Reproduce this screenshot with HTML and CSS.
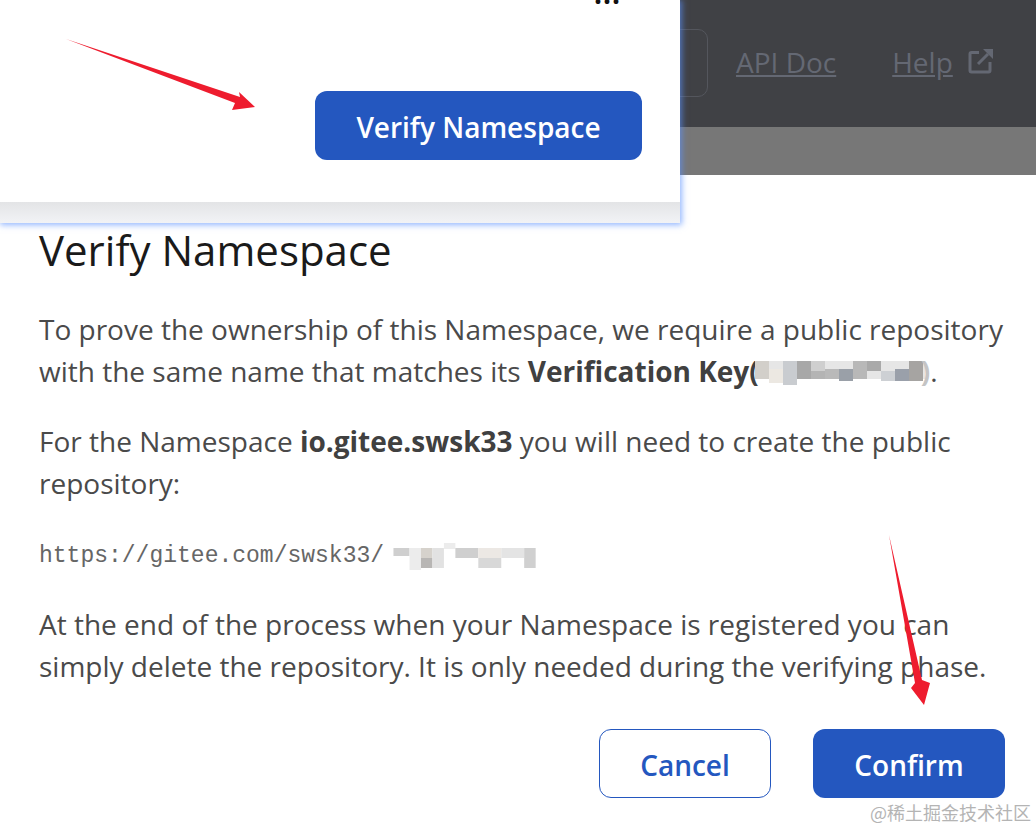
FILE: index.html
```html
<!DOCTYPE html>
<html lang="en">
<head>
<meta charset="utf-8">
<title>Verify Namespace</title>
<link rel="stylesheet" href="styles.css">
</head>
<body>
<div class="page">
  <header class="topbar">
    <div class="search-edge"></div>
    <a class="nav-link api" href="#">API Doc</a>
    <a class="nav-link" href="#">Help</a>
    <svg class="ext" width="26" height="26" viewBox="0 0 26 26" fill="none" stroke="#646873" stroke-width="3"><path d="M11 4.500H3.500A1.500 1.500 0 0 0 2 6V22.500A1.500 1.500 0 0 0 3.500 24H20.500A1.500 1.500 0 0 0 22 22.500V14"/><path d="M10 16 20 6"/><path d="M15 1H25V11L21.500 7.500 18.500 4.500Z" fill="#646873" stroke="none"/></svg>
  </header>
  <div class="strip"></div>
  <main class="dialog">
    <h2 class="title">Verify Namespace</h2>
    <p class="para">To prove the ownership of this Namespace, we require a public repository with the same name that matches its <b>Verification Key(<svg class="blur key" width="170" height="26" viewBox="0 0 170 26"><rect x="0" y="2" width="170" height="18" fill="#e6e6e6"/><rect x="0" y="2" width="14" height="18" fill="#d2cfca"/><rect x="14" y="10" width="14" height="14" fill="#ece8e2"/><rect x="28" y="2" width="14" height="24" fill="#c9ccd0"/><rect x="42" y="2" width="14" height="18" fill="#a8a8a8"/><rect x="56" y="2" width="14" height="10" fill="#cfcfcf"/><rect x="56" y="12" width="14" height="8" fill="#b4b4b4"/><rect x="70" y="10" width="14" height="10" fill="#b9b9b9"/><rect x="84" y="10" width="14" height="12" fill="#9aa0a8"/><rect x="98" y="2" width="14" height="18" fill="#b8b8b8"/><rect x="112" y="2" width="14" height="10" fill="#a9a9a9"/><rect x="126" y="12" width="14" height="10" fill="#cdd0d4"/><rect x="140" y="10" width="14" height="12" fill="#9aa0aa"/><rect x="154" y="2" width="14" height="20" fill="#a6a4a2"/></svg><span class="faint">)</span></b>.</p>
    <p class="para">For the Namespace <b>io.gitee.swsk33</b> you will need to create the public repository:</p>
    <p class="url">https://gitee.com/swsk33/<svg class="blur blur-url" width="172" height="28" viewBox="0 0 150 28" preserveAspectRatio="none"><rect x="10" y="6" width="14" height="8" fill="#cfcfcf"/><rect x="24" y="6" width="10" height="22" fill="#ececec"/><rect x="34" y="6" width="10" height="10" fill="#d6d2cc"/><rect x="34" y="16" width="10" height="10" fill="#b8b6b4"/><rect x="44" y="6" width="10" height="20" fill="#e2e2e2"/><rect x="54" y="1" width="10" height="6" fill="#ececec"/><rect x="64" y="6" width="20" height="10" fill="#cfcfcf"/><rect x="84" y="6" width="20" height="10" fill="#ece8e4"/><rect x="84" y="16" width="20" height="10" fill="#d8d8d8"/><rect x="104" y="6" width="20" height="10" fill="#e4e4e4"/><rect x="124" y="6" width="10" height="20" fill="#d0d0d0"/></svg></p>
    <p class="para">At the end of the process when your Namespace is registered you can simply delete the repository. It is only needed during the verifying phase.</p>
    <div class="actions">
      <button class="btn btn-outline" type="button">Cancel</button>
      <button class="btn btn-solid" type="button">Confirm</button>
    </div>
  </main>
  <section class="card">
    <span class="dots">...</span>
    <button class="btn btn-solid btn-card" type="button">Verify Namespace</button>
  </section>
  <svg class="arrow arrow-one" width="200" height="80" viewBox="66 38 200 80"><path d="M66 39 240 97 239 92 255 107 232 110 235 103Z" fill="#ee1c2e"/></svg>
  <svg class="arrow arrow-two" width="50" height="180" viewBox="885 530 50 180"><path d="M889 535 922 680 930 683 924 705 911 688 915 683Z" fill="#ee1c2e"/></svg>
  <span class="mark">@稀土掘金技术社区</span>
</div>
</body>
</html>
```

FILE: styles.css
```css
* { box-sizing: border-box; }
html, body { margin: 0; padding: 0; background: #fff; }
.page {
  position: relative;
  width: 1036px;
  height: 829px;
  overflow: hidden;
  font-family: "Open Sans", "Noto Sans", sans-serif;
  color: #4a4a4a;
}
.topbar {
  height: 127px;
  background: #404145;
  display: flex;
  align-items: center;
  padding-left: 600px;
}
.search-edge {
  width: 108px;
  height: 68px;
  margin-top: -1px;
  border: 1px solid #54565d;
  border-radius: 10px;
  flex: none;
}
.nav-link {
  color: #646873;
  font-size: 28px;
  line-height: 38px;
  text-decoration: underline;
  margin-top: -4px;
}
.api { margin-left: 28px; margin-right: 56px; }
.ext { margin-left: 15px; margin-top: -6px; flex: none; }
.strip { height: 48px; background: #777; }
.dialog { padding: 46px 31px 0 39px; }
.title {
  margin: 0 0 29px;
  font-size: 42px;
  line-height: 58px;
  font-weight: 400;
  color: #1a1a1a;
}
.para {
  margin: 0 0 28px;
  font-size: 28px;
  line-height: 42px;
}
.para b { font-weight: 700; color: #404040; }
.faint { color: #c4c4c4; margin-left: -4px; }
.url {
  margin: 0 0 28px;
  height: 43px;
  padding-top: 3px;
  font-family: "Liberation Mono", monospace;
  font-size: 23px;
  line-height: 43px;
  color: #666;
  white-space: nowrap;
}
.blur { vertical-align: middle; }
.blur-url { margin-left: -2px; }
.key { margin-top: -6px; margin-left: -4px; }
.actions {
  display: flex;
  justify-content: flex-end;
  gap: 42px;
  margin-top: 42px;
}
.btn {
  height: 69px;
  border-radius: 12px;
  font-family: "Open Sans", "Noto Sans", sans-serif;
  font-size: 28px;
  font-weight: 600;
  padding: 2px 0 0;
}
.btn-outline {
  width: 172px;
  background: #fff;
  color: #2457bf;
  border: 1px solid #2457bf;
}
.btn-solid {
  width: 192px;
  background: #2457bf;
  color: #fff;
  border: 0;
}
.card {
  position: absolute;
  left: 0;
  top: 0;
  width: 680px;
  height: 223px;
  background: linear-gradient(#fff 202px, #e3e4e6 202px, #f2f3f6 223px);
  box-shadow: 1px 1px 6px 1px rgba(90, 145, 255, 0.65);
}
.dots {
  position: absolute;
  left: 594px;
  top: -22px;
  font-size: 28px;
  font-weight: 700;
  line-height: 30px;
  color: #111;
  letter-spacing: 1px;
}
.btn-card {
  position: absolute;
  left: 315px;
  top: 91px;
  width: 327px;
  height: 69px;
}
.arrow { position: absolute; }
.arrow-one { left: 66px; top: 38px; }
.arrow-two { left: 885px; top: 530px; }
.mark {
  position: absolute;
  left: 870px;
  top: 800px;
  font-family: "Noto Sans CJK SC", sans-serif;
  font-size: 18px;
  line-height: 24px;
  color: #b4b4b4;
  white-space: nowrap;
}
```
